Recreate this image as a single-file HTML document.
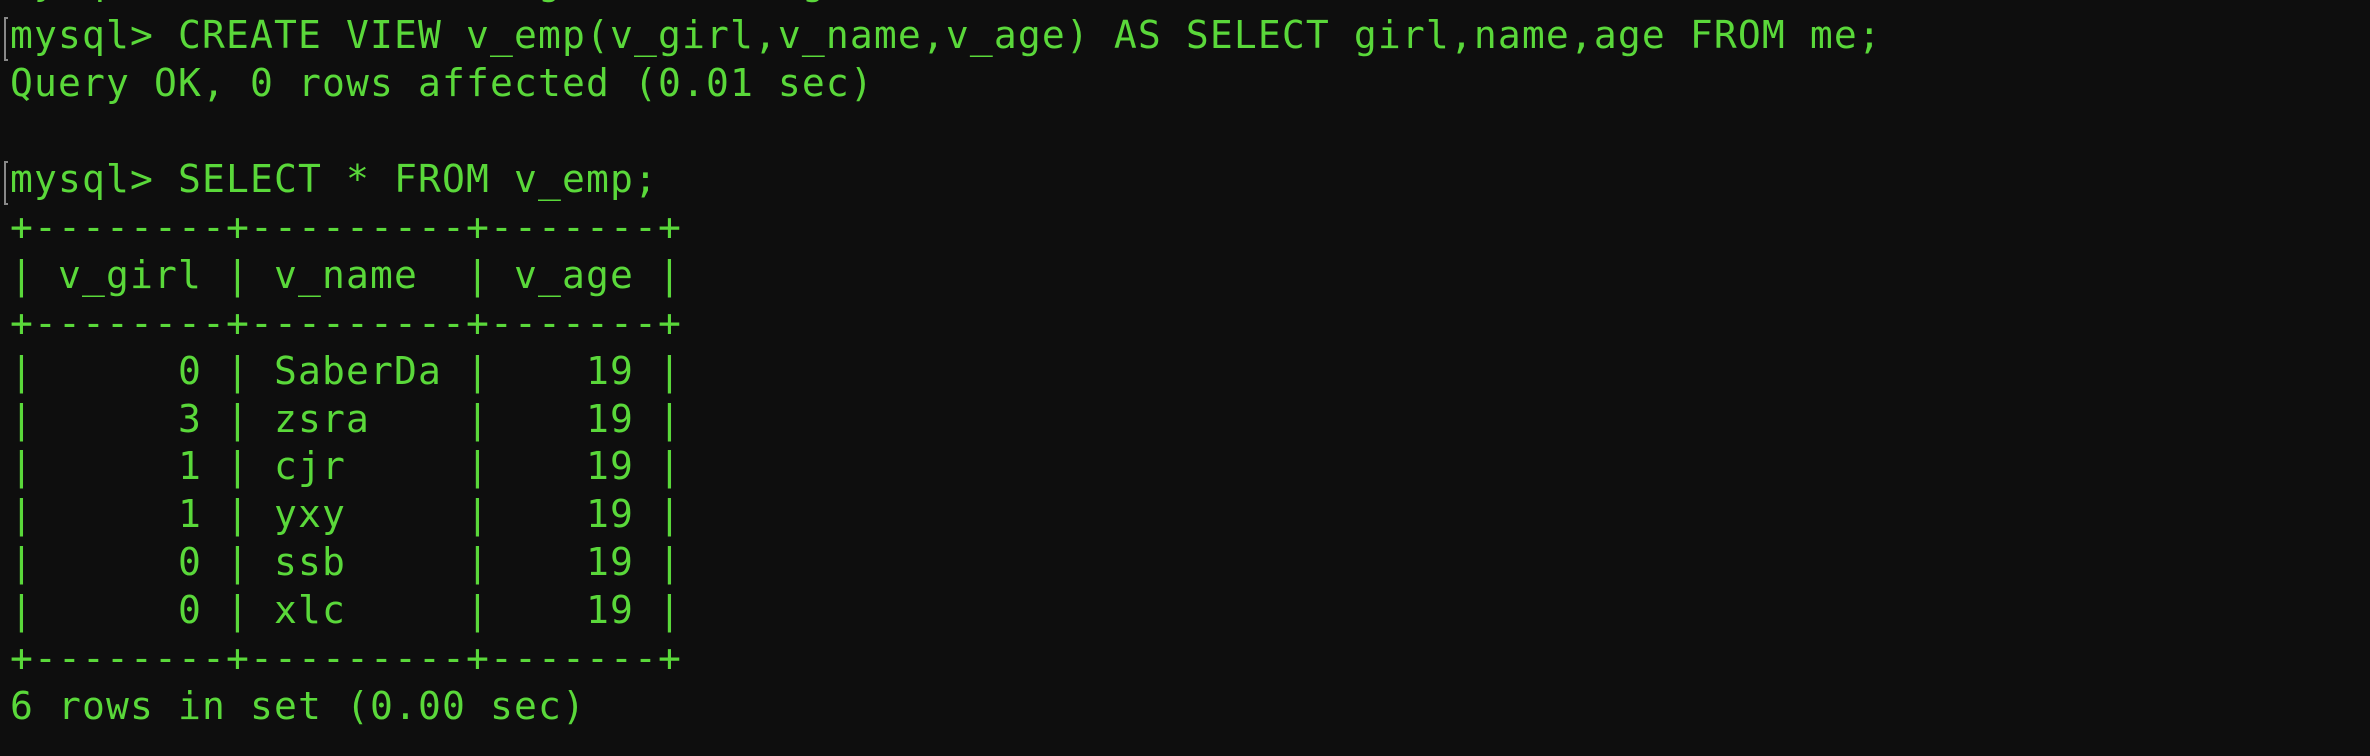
<!DOCTYPE html>
<html><head><meta charset="utf-8"><style>
html,body{margin:0;padding:0;background:#0e0e0e;width:2370px;height:756px;overflow:hidden}
pre{position:absolute;left:10px;margin:0;font-family:"DejaVu Sans Mono","Liberation Mono",monospace;font-size:38px;letter-spacing:1.12px;line-height:47.93px;color:#5ad83a;white-space:pre}
.c{position:absolute;left:4px;height:40px;border-left:2px solid #888;border-top:2px solid #888;border-bottom:2px solid #888;width:2px}
</style></head><body>
<div class="c" style="top:17px"></div>
<div class="c" style="top:161px"></div>
<pre style="top:-42px">mysql> INSERT INTO me(girl,name,age) VALUES(0,'xlc',19);</pre>
<pre style="top:12px">mysql> CREATE VIEW v_emp(v_girl,v_name,v_age) AS SELECT girl,name,age FROM me;
Query OK, 0 rows affected (0.01 sec)

mysql> SELECT * FROM v_emp;
+--------+---------+-------+
| v_girl | v_name  | v_age |
+--------+---------+-------+
|      0 | SaberDa |    19 |
|      3 | zsra    |    19 |
|      1 | cjr     |    19 |
|      1 | yxy     |    19 |
|      0 | ssb     |    19 |
|      0 | xlc     |    19 |
+--------+---------+-------+
6 rows in set (0.00 sec)</pre>
</body></html>
